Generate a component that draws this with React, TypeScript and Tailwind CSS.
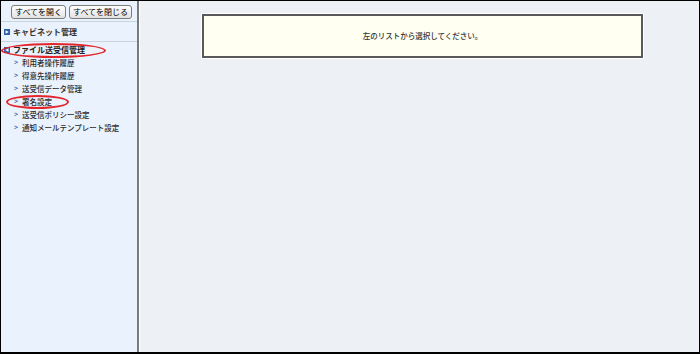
import React from "react";

const ITEMS = [
  "利用者操作履歴",
  "得意先操作履歴",
  "送受信データ管理",
  "署名設定",
  "送受信ポリシー設定",
  "通知メールテンプレート設定",
];

function NodeIcon({ open }: { open?: boolean }) {
  return (
    <svg width="6" height="6" viewBox="0 0 6 6" className="shrink-0">
      <rect width="6" height="6" fill="#2f5fa8" />
      {open ? (
        <polygon points="4.5,1.2 1.3,3 4.5,4.8" fill="#fff" />
      ) : (
        <polygon points="1.6,1.2 4.7,3 1.6,4.8" fill="#fff" />
      )}
    </svg>
  );
}

export default function App() {
  return (
    <div
      className="w-[700px] h-[354px] border border-black border-b-2 flex overflow-hidden text-[#333]"
      style={{ fontFamily: '"Noto Sans CJK JP", "Noto Sans", sans-serif' }}
    >
      {/* side tree */}
      <aside className="relative w-[136px] shrink-0 bg-[#eaf2fd]">
        <div className="flex gap-[3px] pl-[10px] pt-[4px] h-[17px]">
          <button className="h-[14px] px-[3px] border border-[#7d7d7d] rounded-[3px] bg-gradient-to-b from-white to-[#e2e2e2] text-[8px] leading-[12px] text-black">
            すべてを開く
          </button>
          <button className="h-[14px] px-[3px] border border-[#7d7d7d] rounded-[3px] bg-gradient-to-b from-white to-[#e2e2e2] text-[8px] leading-[12px] text-black">
            すべてを閉じる
          </button>
        </div>
        <div className="mt-[3px] h-px bg-[#c9d3de]" />
        <div className="flex items-center gap-[3px] pl-[3px] h-[19px] text-[8px] font-bold">
          <NodeIcon />
          <span>キャビネット管理</span>
        </div>
        <div className="h-px bg-[#c9d3de]" />
        <div className="flex items-center gap-[3px] pl-[3px] h-[12px] mt-[2px] text-[8px] font-bold text-[#222]">
          <NodeIcon open />
          <span>ファイル送受信管理</span>
        </div>
        <ul className="text-[7.5px] font-medium text-[#2a2a2a]">
          {ITEMS.map((t) => (
            <li key={t} className="flex items-center h-[13px] pl-[13px]">
              <span className="w-[8px] text-[#2f5fa8] font-bold text-[7px]">&gt;</span>
              <span>{t}</span>
            </li>
          ))}
        </ul>

        {/* red annotation ellipses */}
        <div className="absolute left-[0px] top-[42px] w-[105px] h-[15px] border-2 border-[#e3262b] rounded-[50%]" />
        <div className="absolute left-[5px] top-[94px] w-[63px] h-[14px] border-2 border-[#e3262b] rounded-[50%]" />
      </aside>

      <div className="w-[2px] shrink-0 bg-[#7a7a7a]" />
      <div className="w-px shrink-0 bg-white" />

      <main className="flex-1 bg-[#edf1f5] pl-[62px] pt-[13px]">
        <div className="w-[441px] h-[44px] bg-[#fffff2] border-2 border-[#5a5a5a] shadow-[0_0_0_1px_#ffffff] flex items-center justify-center text-[7.5px] font-medium text-[#333]">
          左のリストから選択してください。
        </div>
      </main>
    </div>
  );
}
